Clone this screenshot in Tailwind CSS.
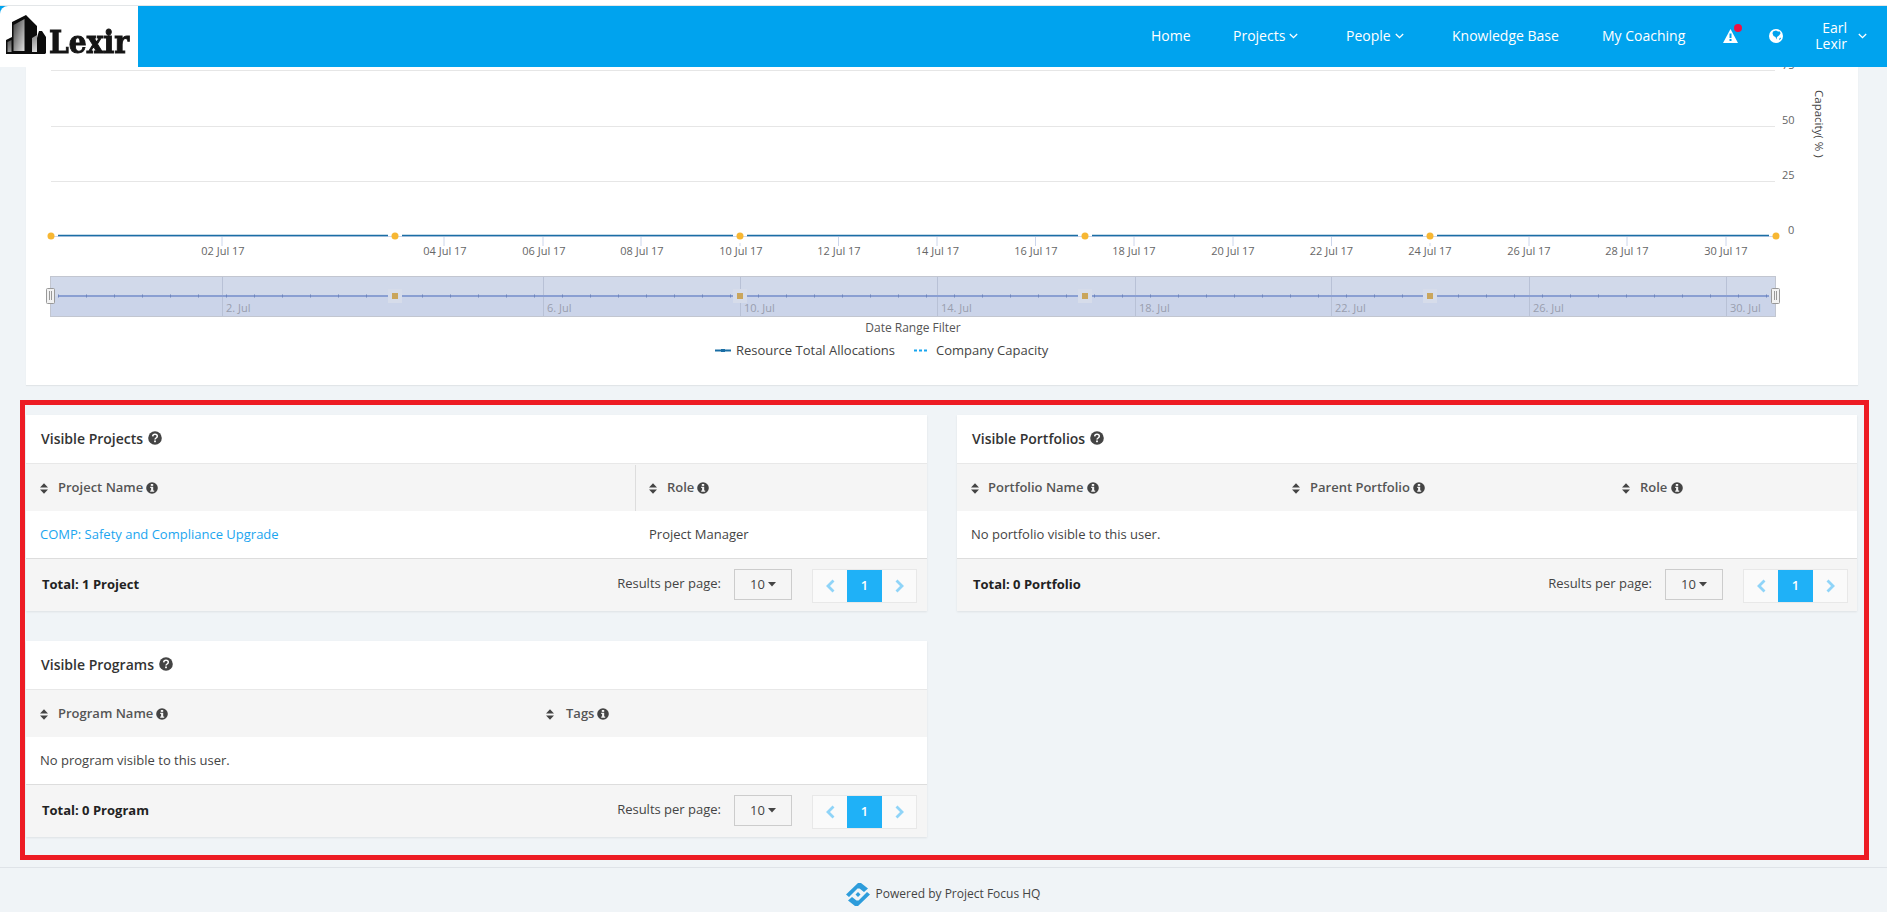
<!DOCTYPE html>
<html lang="en">
<head>
    <meta charset="UTF-8">
    <meta name="viewport" content="width=device-width, initial-scale=1.0">
    <title>Lexir - Project Focus HQ</title>
    <script src="https://cdn.jsdelivr.net/npm/@tailwindcss/browser@4"></script>
</head>
<body class="bg-[#f0f4f7] font-['Open_Sans',sans-serif] text-[13px] text-[#444] h-[912px] w-[1887px] overflow-hidden">

    <!-- shared icons -->
    <svg class="hidden">
        <symbol id="i-sort" viewBox="0 0 9 12"><path d="M4.5 0 9 4.8H0zM4.5 12 0 7.2h9z" fill="#444"/></symbol>
        <symbol id="i-info" viewBox="0 0 12 12"><circle cx="6" cy="6" r="5.8" fill="#444"/><rect x="4.8" y="2" width="2.4" height="1.9" fill="#f5f5f5"/><path d="M4.2 4.8h3v3.7h1v1.3H4.2V8.5h.9V6.1h-.9z" fill="#f5f5f5"/></symbol>
        <symbol id="i-help" viewBox="0 0 14 14"><circle cx="7" cy="7" r="6.8" fill="#444"/><path d="M4.7 5.4C4.8 4 5.8 3.3 7 3.3c1.3 0 2.3.8 2.3 2 0 1.7-2.300 1.700-2.300 3.300" fill="none" stroke="#fff" stroke-width="1.5"/><rect x="6.1" y="9.5" width="1.8" height="1.700" fill="#fff"/></symbol>
        <symbol id="i-down" viewBox="0 0 11 7"><path d="M1 1l4.500 4.500L10 1" fill="none" stroke="#fff" stroke-width="1.6"/></symbol>
        <symbol id="i-caret" viewBox="0 0 8 5"><path d="M0 0h8L4 4.500z" fill="#444"/></symbol>
        <symbol id="i-prev" viewBox="0 0 9 14"><path d="M7.500 1.500 2 7l5.500 5.500" fill="none" stroke="#8fd4f8" stroke-width="2.800"/></symbol>
        <symbol id="i-next" viewBox="0 0 9 14"><path d="M1.500 1.500 7 7l-5.500 5.500" fill="none" stroke="#8fd4f8" stroke-width="2.800"/></symbol>
    </svg>

    <!-- top bar -->
    <div class="h-[5px] bg-white"></div>
    <header class="h-[62px] flex items-stretch bg-[#00a3ee] border-t border-[#e3e6e8]">
        <a href="#" class="w-[138px] bg-white rounded-tl-lg block">
            <svg width="138" height="61" viewBox="0 6 138 61" class="blur-[0.35px]">
                <defs>
                    <linearGradient id="glass" x1="0" y1="0" x2="1" y2="1">
                        <stop offset="0" stop-color="#3a3a3a"/>
                        <stop offset="0.55" stop-color="#9a9a9a"/>
                        <stop offset="1" stop-color="#e2e2e2"/>
                    </linearGradient>
                </defs>
                <path d="M6 54V40l6-3V22l14-7 11 11v12l1-4 1-3h3l4 6v16l-1 1z" fill="#0c0c0c"/>
                <path d="M13.500 51V25l11-6v32z" fill="url(#glass)"/>
                <path d="M7.500 52V42l4-2v12zM32 52V38l5-3v17z" fill="url(#glass)"/>
                <text x="49" y="52.500" font-family="'DejaVu Serif',serif" font-weight="700" font-size="31" fill="#151515" stroke="#151515" stroke-width="1" textLength="80" lengthAdjust="spacingAndGlyphs">Lexir</text>
            </svg>
        </a>
        <nav class="ml-auto pb-[2px] flex items-center text-white text-[14px] font-medium">
            <a href="#" class="w-[82px]">Home</a>
            <a href="#" class="w-[113px] flex items-center gap-[4px]">Projects <svg class="w-[9px] h-[6px]"><use href="#i-down"/></svg></a>
            <a href="#" class="w-[106px] flex items-center gap-[4px]">People <svg class="w-[9px] h-[6px]"><use href="#i-down"/></svg></a>
            <a href="#" class="w-[150px]">Knowledge Base</a>
            <a href="#" class="w-[121px]">My Coaching</a>
            <a href="#" class="relative w-[46px]">
                <svg width="15" height="14" viewBox="0 0 15 14" class="block"><path d="M7.500 0 15 14H0z" fill="#fff"/><rect x="6.500" y="4.500" width="2" height="4.500" fill="#00a3ee"/><rect x="6.500" y="10" width="2" height="2" fill="#00a3ee"/></svg>
                <span class="absolute left-[11px] top-[-5px] w-[8px] h-[8px] rounded-full bg-[#ee1144]"></span>
            </a>
            <a href="#" class="w-[45px]">
                <svg width="14" height="14" viewBox="0 0 14 14" class="block"><circle cx="7" cy="7" r="7" fill="#fff"/><path d="M4 2.500 7 1.500l2 1 2 0 .5 2-1.500 2-2 1.500-.5 2.500-1-2.500-2-1-1-2.500zM10 10l1.500-1.500.5 1-1.500 1.500z" fill="#00a3ee"/></svg>
            </a>
            <a href="#" class="w-[73px] flex items-center">
                <span class="w-[33px] text-right leading-[16px]">Earl<br>Lexir</span>
                <svg class="w-[9px] h-[6px] ml-[11px]"><use href="#i-down"/></svg>
            </a>
        </nav>
    </header>

    <main class="ml-[20px] w-[1849px]">
        <!-- chart card, svg uses page coordinates -->
        <section class="ml-[6px] w-[1832px] h-[318px] bg-white shadow-[0_1px_1px_rgba(0,0,0,0.06)]">
            <svg width="1832" height="318" viewBox="26 67 1832 318" font-family="'Open Sans',sans-serif" class="block">
                <g stroke="#e6e6e6"><path d="M51 70.500H1775M51 126.500H1775M51 181.500H1775"/></g>
                <g font-size="11" fill="#666">
                    <text x="1782" y="69">75</text><text x="1782" y="124">50</text><text x="1782" y="179">25</text><text x="1788" y="234">0</text>
                </g>
                <text x="1815" y="90" font-size="11.500" fill="#444" transform="rotate(90 1815 90)">Capacity( % )</text>

                <path d="M51 236.500H1775" stroke="#ccd6eb"/>
                <g stroke="#ccd6eb"><path d="M222 237v9M444 237v9M543 237v9M641 237v9M740 243v3M838.500 237v9M937 237v9M1035.500 237v9M1134 237v9M1233 237v9M1331.500 237v9M1430 243v3M1529 237v9M1627 237v9M1726 237v9"/></g>
                <g stroke="#1a6ea5" stroke-width="1.500"><path d="M58 235.500H388M402 235.500H733M747 235.500H1078M1092 235.500H1423M1437 235.500H1769"/></g>
                <g fill="#f7b733"><circle cx="51" cy="236" r="3.500"/><circle cx="395" cy="236" r="3.500"/><circle cx="740" cy="236" r="3.500"/><circle cx="1085" cy="236" r="3.500"/><circle cx="1430" cy="236" r="3.500"/><circle cx="1776" cy="236" r="3.500"/></g>
                <g font-size="11" fill="#666" text-anchor="middle">
                    <text x="223" y="255">02 Jul 17</text><text x="445" y="255">04 Jul 17</text><text x="544" y="255">06 Jul 17</text><text x="642" y="255">08 Jul 17</text><text x="741" y="255">10 Jul 17</text><text x="839" y="255">12 Jul 17</text><text x="937.500" y="255">14 Jul 17</text><text x="1036" y="255">16 Jul 17</text><text x="1134" y="255">18 Jul 17</text><text x="1233" y="255">20 Jul 17</text><text x="1331.500" y="255">22 Jul 17</text><text x="1430" y="255">24 Jul 17</text><text x="1529" y="255">26 Jul 17</text><text x="1627" y="255">28 Jul 17</text><text x="1726" y="255">30 Jul 17</text>
                </g>

                <!-- range navigator -->
                <rect x="50.500" y="276.500" width="1725" height="40" fill="#cbd4e9" stroke="#c2c6d0"/>
                <rect x="51" y="277" width="1724" height="19" fill="#d1d9ea"/>
                <g stroke="#b8c1d6"><path d="M222.500 277v39M543.500 277v39M740.500 277v39M937.500 277v39M1135.500 277v39M1331.500 277v39M1529.500 277v39M1726.500 277v39"/></g>
                <path d="M58 296H1769" stroke="#8a9fd2" stroke-width="2"/>
                <path d="M58 296H1769" stroke="#6f86bd" stroke-width="3" stroke-dasharray="1 27"/>
                <g fill="#d6dcea"><rect x="388" y="289" width="14" height="14"/><rect x="733" y="289" width="14" height="14"/><rect x="1078" y="289" width="14" height="14"/><rect x="1423" y="289" width="14" height="14"/></g>
                <g fill="#c9a55c"><rect x="392" y="293" width="6" height="6"/><rect x="737" y="293" width="6" height="6"/><rect x="1082" y="293" width="6" height="6"/><rect x="1427" y="293" width="6" height="6"/></g>
                <g font-size="11" fill="#999eae">
                    <text x="226" y="312">2. Jul</text><text x="547" y="312">6. Jul</text><text x="744" y="312">10. Jul</text><text x="941" y="312">14. Jul</text><text x="1139" y="312">18. Jul</text><text x="1335" y="312">22. Jul</text><text x="1533" y="312">26. Jul</text><text x="1730" y="312">30. Jul</text>
                </g>
                <g fill="#f2f2f2" stroke="#999"><rect x="46.500" y="288.500" width="8" height="15" rx="1"/><rect x="1771.500" y="288.500" width="8" height="15" rx="1"/></g>
                <g stroke="#999"><path d="M49.500 291v9M51.500 291v9M1774.500 291v9M1776.500 291v9"/></g>

                <text x="913" y="332" font-size="12" fill="#555" text-anchor="middle">Date Range Filter</text>
                <path d="M715 350.500H731" stroke="#1a6ea5" stroke-width="2"/>
                <rect x="721" y="349" width="4" height="3" fill="#1a6ea5"/>
                <text x="736" y="355" font-size="13" fill="#444">Resource Total Allocations</text>
                <path d="M914 350.500H929" stroke="#18a5ef" stroke-width="2" stroke-dasharray="3 2"/>
                <text x="936" y="355" font-size="13" fill="#444">Company Capacity</text>
            </svg>
        </section>

        <!-- annotated area -->
        <section class="mt-[15px] h-[460px] border-[5px] border-[#ed1c24] pl-[1px] pt-[10px] grid grid-cols-[901px_900px] grid-rows-[196px_196px] gap-x-[30px] gap-y-[30px]">

            <!-- Visible Projects -->
            <div class="bg-[#f5f5f5] shadow-[0_1px_2px_rgba(0,0,0,0.08)]">
                <h3 class="h-[49px] pb-[2px] bg-white border-b border-[#e8e8e8] pl-[15px] flex items-center gap-[5px] text-[14px] font-semibold text-[#333]">Visible Projects <svg class="w-[14px] h-[14px]"><use href="#i-help"/></svg></h3>
                <div class="h-[47px] pt-[1px] grid grid-cols-[609px_1fr] font-semibold text-[#555]">
                    <div class="flex items-center pl-[14px]"><svg class="w-[8px] h-[11px] mr-[10px]"><use href="#i-sort"/></svg>Project Name<svg class="w-[12px] h-[12px] ml-[3px]"><use href="#i-info"/></svg></div>
                    <div class="flex items-center pl-[13px] border-l border-[#ddd]"><svg class="w-[8px] h-[11px] mr-[10px]"><use href="#i-sort"/></svg>Role<svg class="w-[12px] h-[12px] ml-[3px]"><use href="#i-info"/></svg></div>
                </div>
                <div class="h-[48px] bg-white border-b border-[#ddd] grid grid-cols-[609px_1fr] items-center">
                    <a href="#" class="pl-[14px] text-[#1ba5ef]">COMP: Safety and Compliance Upgrade</a>
                    <span class="pl-[14px]">Project Manager</span>
                </div>
                <div class="h-[52px] flex justify-between pl-[16px] pr-[10px]">
                    <strong class="self-center font-bold text-[#222]">Total: 1 Project</strong>
                    <div class="flex items-start pt-[10px]">
                        <span class="mr-[13px] mt-[5px] text-[#444]">Results per page:</span>
                        <button class="w-[58px] h-[31px] border border-[#ccc] flex items-center justify-center gap-[3px]">10 <svg class="w-[8px] h-[5px]"><use href="#i-caret"/></svg></button>
                        <div class="ml-[20px] h-[34px] flex border border-[#e8e8e8] bg-[#fafafa]">
                            <span class="w-[34px] flex items-center justify-center"><svg class="w-[9px] h-[14px]"><use href="#i-prev"/></svg></span>
                            <span class="w-[35px] flex items-center justify-center bg-[#1fb1f7] text-white font-semibold">1</span>
                            <span class="w-[34px] flex items-center justify-center"><svg class="w-[9px] h-[14px]"><use href="#i-next"/></svg></span>
                        </div>
                    </div>
                </div>
            </div>

            <!-- Visible Portfolios -->
            <div class="bg-[#f5f5f5] shadow-[0_1px_2px_rgba(0,0,0,0.08)]">
                <h3 class="h-[49px] pb-[2px] bg-white border-b border-[#e8e8e8] pl-[15px] flex items-center gap-[5px] text-[14px] font-semibold text-[#333]">Visible Portfolios <svg class="w-[14px] h-[14px]"><use href="#i-help"/></svg></h3>
                <div class="h-[47px] pt-[1px] grid grid-cols-[321px_330px_1fr] font-semibold text-[#555]">
                    <div class="flex items-center pl-[14px]"><svg class="w-[8px] h-[11px] mr-[9px]"><use href="#i-sort"/></svg>Portfolio Name<svg class="w-[12px] h-[12px] ml-[3px]"><use href="#i-info"/></svg></div>
                    <div class="flex items-center pl-[14px]"><svg class="w-[8px] h-[11px] mr-[10px]"><use href="#i-sort"/></svg>Parent Portfolio<svg class="w-[12px] h-[12px] ml-[3px]"><use href="#i-info"/></svg></div>
                    <div class="flex items-center pl-[14px]"><svg class="w-[8px] h-[11px] mr-[10px]"><use href="#i-sort"/></svg>Role<svg class="w-[12px] h-[12px] ml-[4px]"><use href="#i-info"/></svg></div>
                </div>
                <div class="h-[48px] bg-white border-b border-[#ddd] pl-[14px] flex items-center">No portfolio visible to this user.</div>
                <div class="h-[52px] flex justify-between pl-[16px] pr-[9px]">
                    <strong class="self-center font-bold text-[#222]">Total: 0 Portfolio</strong>
                    <div class="flex items-start pt-[10px]">
                        <span class="mr-[13px] mt-[5px] text-[#444]">Results per page:</span>
                        <button class="w-[58px] h-[31px] border border-[#ccc] flex items-center justify-center gap-[3px]">10 <svg class="w-[8px] h-[5px]"><use href="#i-caret"/></svg></button>
                        <div class="ml-[20px] h-[34px] flex border border-[#e8e8e8] bg-[#fafafa]">
                            <span class="w-[34px] flex items-center justify-center"><svg class="w-[9px] h-[14px]"><use href="#i-prev"/></svg></span>
                            <span class="w-[35px] flex items-center justify-center bg-[#1fb1f7] text-white font-semibold">1</span>
                            <span class="w-[34px] flex items-center justify-center"><svg class="w-[9px] h-[14px]"><use href="#i-next"/></svg></span>
                        </div>
                    </div>
                </div>
            </div>

            <!-- Visible Programs -->
            <div class="bg-[#f5f5f5] shadow-[0_1px_2px_rgba(0,0,0,0.08)]">
                <h3 class="h-[49px] pb-[2px] bg-white border-b border-[#e8e8e8] pl-[15px] flex items-center gap-[5px] text-[14px] font-semibold text-[#333]">Visible Programs <svg class="w-[14px] h-[14px]"><use href="#i-help"/></svg></h3>
                <div class="h-[47px] pt-[1px] grid grid-cols-[506px_1fr] font-semibold text-[#555]">
                    <div class="flex items-center pl-[14px]"><svg class="w-[8px] h-[11px] mr-[10px]"><use href="#i-sort"/></svg>Program Name<svg class="w-[12px] h-[12px] ml-[3px]"><use href="#i-info"/></svg></div>
                    <div class="flex items-center pl-[14px]"><svg class="w-[8px] h-[11px] mr-[12px]"><use href="#i-sort"/></svg>Tags<svg class="w-[12px] h-[12px] ml-[3px]"><use href="#i-info"/></svg></div>
                </div>
                <div class="h-[48px] pt-[1px] bg-white border-b border-[#ddd] pl-[14px] flex items-center">No program visible to this user.</div>
                <div class="h-[52px] flex justify-between pl-[16px] pr-[10px]">
                    <strong class="self-center font-bold text-[#222]">Total: 0 Program</strong>
                    <div class="flex items-start pt-[10px]">
                        <span class="mr-[13px] mt-[5px] text-[#444]">Results per page:</span>
                        <button class="w-[58px] h-[31px] border border-[#ccc] flex items-center justify-center gap-[3px]">10 <svg class="w-[8px] h-[5px]"><use href="#i-caret"/></svg></button>
                        <div class="ml-[20px] h-[34px] flex border border-[#e8e8e8] bg-[#fafafa]">
                            <span class="w-[34px] flex items-center justify-center"><svg class="w-[9px] h-[14px]"><use href="#i-prev"/></svg></span>
                            <span class="w-[35px] flex items-center justify-center bg-[#1fb1f7] text-white font-semibold">1</span>
                            <span class="w-[34px] flex items-center justify-center"><svg class="w-[9px] h-[14px]"><use href="#i-next"/></svg></span>
                        </div>
                    </div>
                </div>
            </div>
        </section>
    </main>

    <footer class="mt-[7px] h-[45px] pt-[8px] pr-[1px] border-t border-[#dfe3e8] flex items-center justify-center gap-[6px] text-[12px] text-[#444]">
        <svg width="24" height="25" viewBox="0 0 24 25">
            <path d="M0 12.500 12 1h3l7 5.500-4 3.500-4.500-3.500h-2l-6 6L3 15z" fill="#2d9cdb"/>
            <path d="M24 12.500 12 24H9l-7-5.500L6 15l4.500 3.500h2l6-6L21 10z" fill="#2d9cdb"/>
            <path d="M12 10 14.500 12.500 12 15 9.500 12.500z" fill="#2d9cdb"/>
        </svg>
        <span>Powered by Project Focus HQ</span>
    </footer>

</body>
</html>
